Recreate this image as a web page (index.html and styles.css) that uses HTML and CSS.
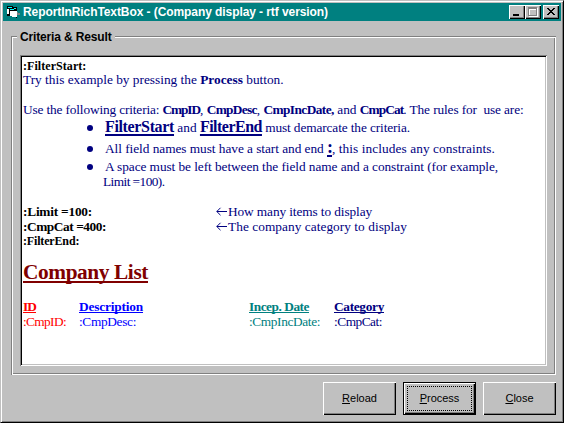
FILE: index.html
```
<!DOCTYPE html>
<html lang="en">
<head>
<meta charset="utf-8">
<title>ReportInRichTextBox</title>
<link rel="stylesheet" href="styles.css">
</head>
<body>
<div class="window">
  <header class="titlebar">
    <svg class="app-icon" width="14" height="14" viewBox="0 0 14 14" shape-rendering="crispEdges">
      <path fill="#808080" d="M10 7h1v1h2v2h-3z"/>
      <path fill="#000" d="M0 1h6v1h4v11h-1v-1h-4v-1h-5z"/>
      <path fill="#0ff" d="M1 2h4v1h-4zM3 4h4v1h-4zM7 3h2v1h-2z"/>
      <path fill="#fff" d="M0 4h2v5h-2zM3 6h7v5h-7zM5 11h5v1h-5z"/>
    </svg>
    <h1 class="caption">ReportInRichTextBox - (Company display - rtf version)</h1>
    <div class="controls">
      <div class="control"><svg width="16" height="14" shape-rendering="crispEdges"><path d="M4 9h6v2h-6z"/></svg></div>
      <div class="control"><svg width="16" height="14" shape-rendering="crispEdges"><path fill="#fff" d="M4 3h9v9h-9z"/><path fill="#808080" d="M3 2h9v9h-9z"/><path fill="#fff" d="M4 4h7v6h-7z"/><path fill="#c0c0c0" d="M5 5h6v5h-6z"/></svg></div>
      <div class="control close"><svg width="16" height="14" shape-rendering="crispEdges"><path d="M4 3h2v1h1v1h2v-1h1v-1h2v1h-1v1h-1v1h-1v1h1v1h1v1h1v1h-2v-1h-1v-1h-2v1h-1v1h-2v-1h1v-1h1v-1h1v-1h-1v-1h-1v-1h-1z"/></svg></div>
    </div>
  </header>
  <fieldset class="group">
    <legend class="legend">Criteria &amp; Result</legend>
    <div class="richtext">
      <div class="line marker first"><b class="t-start">:FilterStart:</b></div>
      <div class="line"><span>Try this example by pressing the </span><b>Process</b> button.</div>
      <div class="line blank"></div>
      <div class="line"><span class="t-use">Use the following criteria: </span><b class="t-id">CmpID</b>, <b class="t-desc">CmpDesc</b>, <b class="t-inc">CmpIncDate,</b> and <b class="t-cat">CmpCat</b><span class="t-rules">. The rules for&nbsp; use are:</span></div>
      <ul class="rules">
        <li class="rule tall"><span><b class="term t-fs">FilterStart</b> and <b class="term t-fe">FilterEnd</b><span class="t-must"> must demarcate the criteria.</span></span></li>
        <li class="rule tall"><span><span class="t-all">All field names must have a start and end </span><b class="term colon">:</b><span class="t-this">, this includes any constraints.</span></span></li>
        <li class="rule"><span class="t-space">A space must be left between the field name and a constraint (for example,</span></li>
        <li class="rule more"><span class="t-limit">Limit =100).</span></li>
      </ul>
      <div class="line blank"></div>
      <div class="line setting"><b class="t-set1">:Limit =100:</b><svg class="arrow" width="12" height="9" viewBox="0 0 12 9"><path d="M11 4.5H.8M4.5 .8L.8 4.5L4.5 8.2"/></svg><span class="t-how">How many items to display</span></div>
      <div class="line setting"><b class="t-set2">:CmpCat =400:</b><svg class="arrow" width="12" height="9" viewBox="0 0 12 9"><path d="M11 4.5H.8M4.5 .8L.8 4.5L4.5 8.2"/></svg><span class="t-comp">The company category to display</span></div>
      <div class="line marker"><b class="t-end">:FilterEnd:</b></div>
      <h2 class="heading">Company List</h2>
      <div class="table">
        <div class="red"><b class="t-hid">ID</b><span class="t-vid">:CmpID:</span></div>
        <div class="blue"><b class="t-hdesc">Description</b><span class="t-vdesc">:CmpDesc:</span></div>
        <div class="teal"><b class="t-hinc">Incep. Date</b><span class="t-vinc">:CmpIncDate:</span></div>
        <div><b class="t-hcat">Category</b><span class="t-vcat">:CmpCat:</span></div>
      </div>
    </div>
  </fieldset>
  <footer class="actions">
    <button class="btn"><span><u>R</u>eload</span></button>
    <button class="btn default"><span><u>P</u>rocess</span></button>
    <button class="btn"><span><u>C</u>lose</span></button>
  </footer>
</div>
</body>
</html>
```
FILE: styles.css
```
* { box-sizing: border-box; }
body { margin: 0; background: #c0c0c0; }

.window {
  width: 564px;
  height: 423px;
  padding: 2px;
  background: #c0c0c0;
  border: 1px solid;
  border-color: #c0c0c0 #000 #000 #c0c0c0;
  box-shadow: inset 1px 1px #fff, inset -1px -1px #808080;
  font-family: "Liberation Sans", sans-serif;
}

.titlebar {
  display: flex;
  align-items: center;
  width: 558px;
  height: 18px;
  padding: 0 2px 0 4px;
  background: #008080;
  color: #fff;
}
.app-icon { margin-right: 2px; }
.caption {
  flex: 1;
  margin: 0;
  font-size: 12px;
  line-height: 18px;
  letter-spacing: -0.078px;
  white-space: nowrap;
}
.controls { display: flex; }
.control {
  width: 16px;
  height: 14px;
  background: #c0c0c0;
  box-shadow: inset 1px 1px #fff, inset -1px -1px #000, inset -2px -2px #808080;
}
.control svg { display: block; }
.close { margin-left: 2px; }

.group {
  width: 545px;
  height: 339px;
  margin: 15px 0 0 8px;
  padding: 0;
  border: 0;
  position: relative;
  box-shadow: inset 1px 1px #808080, inset -1px -1px #fff, inset 2px 2px #fff, inset -2px -2px #808080;
}
.legend {
  position: absolute;
  left: 6px;
  top: -7px;
  padding: 0 3px;
  background: #c0c0c0;
  font-size: 12px;
  font-weight: bold;
  line-height: 16px;
  letter-spacing: -0.149px;
}
.richtext {
  display: flow-root;
  width: 527px;
  height: 311px;
  margin: 19px 0 0 9px;
  padding: 2px 2px 2px 3px;
  background: #fff;
  box-shadow: inset 1px 1px #808080, inset -1px -1px #fff, inset 2px 2px #000, inset -2px -2px #c0c0c0;
  color: #000080;
  font: 13.33px/15px "Liberation Serif", serif;
}
.line { height: 15px; white-space: pre; }
.marker { color: #000; font-size: 12px; }
.marker.first { padding-top: 3px; line-height: 12px; }

.rules { margin: 0; padding: 0 0 0 64px; list-style: none; }
.rule { display: flex; align-items: center; height: 15px; white-space: pre; }
.rule::before { content: ""; width: 6px; height: 6px; margin-right: 12px; border-radius: 50%; background: #000080; }
.tall { height: 21px; line-height: 21px; }
.more { padding-left: 16px; }
.more::before { display: none; }
.term {
  font-size: 16px;
  line-height: 0;
  text-decoration: underline 2px;
  text-underline-offset: 2px;
  text-decoration-skip-ink: none;
}
.colon { font-size: 18px; letter-spacing: -1px; }

.setting { display: grid; grid-template-columns: 193px 12px auto; color: #000080; }
.setting b { color: #000; }
.arrow { margin-top: 3px; fill: none; stroke: #000080; stroke-width: 1; }

.heading {
  width: max-content;
  margin: 11px 0 15px;
  color: #800000;
  font-size: 21.33px;
  line-height: 24px;
  letter-spacing: -0.398px;
  text-decoration: underline 2px;
  text-underline-offset: 2px;
  text-decoration-skip-ink: none;
}
.table { display: grid; grid-template-columns: 56px 170px 85px auto; }
.table b {
  display: block;
  width: max-content;
  text-decoration: underline 1px;
  text-underline-offset: 1px;
  text-decoration-skip-ink: none;
}
.table span { display: block; }
.red { color: #f00; }
.blue { color: #00f; }
.teal { color: #008080; }

.t-start { letter-spacing: 0.06px; }
.t-end { letter-spacing: -0.16px; }
.t-use { letter-spacing: -0.147px; }
.t-id { letter-spacing: -1.09px; }
.t-desc { letter-spacing: -0.683px; }
.t-inc { letter-spacing: -0.557px; }
.t-cat { letter-spacing: -0.895px; }
.t-rules { letter-spacing: -0.109px; }
.t-fs { letter-spacing: -0.35px; }
.t-fe { letter-spacing: -0.518px; }
.t-must { letter-spacing: -0.115px; }
.t-all { letter-spacing: -0.046px; }
.t-this { letter-spacing: 0.073px; }
.t-space { letter-spacing: -0.07px; }
.t-limit { letter-spacing: -0.561px; }
.t-set1 { letter-spacing: -0.219px; }
.t-set2 { letter-spacing: -0.436px; }
.t-how { letter-spacing: -0.104px; }
.t-comp { letter-spacing: 0.043px; }
.t-hid { letter-spacing: -0.906px; }
.t-hdesc { letter-spacing: -0.172px; }
.t-hinc { letter-spacing: -0.468px; }
.t-hcat { letter-spacing: -0.319px; }
.t-vid { letter-spacing: -0.627px; }
.t-vdesc { letter-spacing: -0.33px; }
.t-vinc { letter-spacing: -0.375px; }
.t-vcat { letter-spacing: -0.479px; }

.actions { display: flex; justify-content: flex-end; gap: 7px; padding: 7px 5px 0 0; }
.btn {
  display: flex;
  align-items: center;
  justify-content: center;
  width: 73px;
  height: 33px;
  padding: 0;
  border: 0;
  background: #c0c0c0;
  box-shadow: inset 1px 1px #fff, inset -1px -1px #000, inset -2px -2px #808080;
  color: #000;
  font: 11px/13px "Liberation Sans", sans-serif;
}
.btn u { text-underline-offset: 1px; }
.default {
  padding: 3px;
  border: 1px solid #000;
}
.default span {
  width: 65px;
  height: 25px;
  border: 1px dotted #000;
  line-height: 23px;
}
```
